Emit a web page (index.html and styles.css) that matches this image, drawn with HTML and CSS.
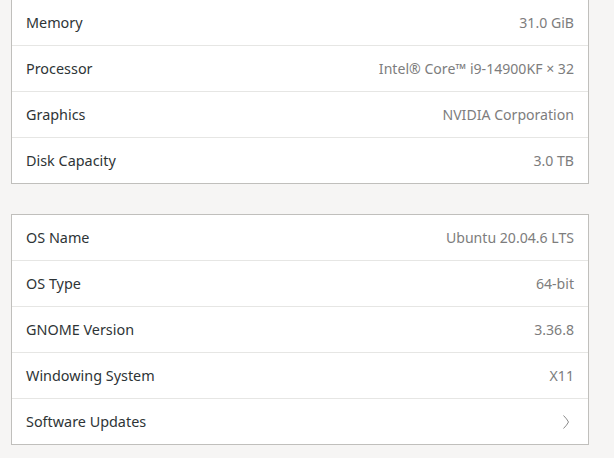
FILE: index.html
```html
<!DOCTYPE html>
<html>
<head>
<meta charset="utf-8">
<link rel="stylesheet" href="styles.css">
</head>
<body>
<div class="page">
  <div class="card first">
    <div class="row"><span class="label">Memory</span><span class="value">31.0 GiB</span></div>
    <div class="row"><span class="label">Processor</span><span class="value">Intel® Core™ i9-14900KF × 32</span></div>
    <div class="row"><span class="label">Graphics</span><span class="value">NVIDIA Corporation</span></div>
    <div class="row"><span class="label">Disk Capacity</span><span class="value">3.0 TB</span></div>
  </div>
  <div class="card">
    <div class="row"><span class="label">OS Name</span><span class="value">Ubuntu 20.04.6 LTS</span></div>
    <div class="row"><span class="label">OS Type</span><span class="value">64-bit</span></div>
    <div class="row"><span class="label">GNOME Version</span><span class="value">3.36.8</span></div>
    <div class="row"><span class="label">Windowing System</span><span class="value">X11</span></div>
    <div class="row"><span class="label">Software Updates</span>
      <svg class="chev" width="16" height="16" viewBox="0 0 16 16"><path d="M5.5 1.5 Q9 5 10.5 8 Q9 11 5.5 14.5" fill="none" stroke="#8a8a8a" stroke-width="1"/></svg>
    </div>
  </div>
</div>
</body>
</html>
```
FILE: styles.css
```css
html, body {
  margin: 0;
  padding: 0;
  background: #f6f5f4;
}
body {
  font-family: "Noto Sans", "Open Sans", sans-serif;
  font-size: 14.4px;
  color: #2e3436;
  overflow: hidden;
}
.page {
  display: flex;
  flex-direction: column;
  gap: 30px;
  margin: -1px 0 0 11px;
  width: 578px;
}
.card {
  background: #ffffff;
  border: 1px solid #c0bfbc;
  display: flex;
  flex-direction: column;
}
.row {
  height: 45px;
  display: flex;
  align-items: center;
  justify-content: space-between;
  padding: 0 14px;
  border-top: 1px solid #e6e6e4;
}
.row:first-child {
  border-top: none;
}
.value {
  color: #7d7d7d;
  font-size: 14.1px;
}
.chev {
  display: block;
}
```
